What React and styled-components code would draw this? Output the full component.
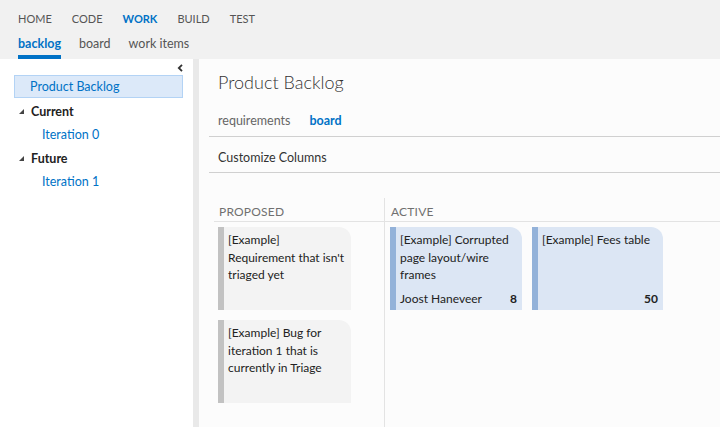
import React from 'react';
import styled, { createGlobalStyle } from 'styled-components';

const GlobalStyle = createGlobalStyle`
  html, body {
    margin: 0;
    padding: 0;
    height: 100%;
  }
  body {
    font-family: Lato, "Open Sans", sans-serif;
    color: #222;
    background: #fff;
  }
  #root {
    height: 100%;
  }
`;

const blue = '#0072c6';

const Page = styled.div`
  display: flex;
  flex-direction: column;
  height: 100vh;
  overflow: hidden;
`;

const Header = styled.header`
  background: #f1f1f1;
  height: 59px;
  padding-left: 18px;
  box-sizing: border-box;
  flex-shrink: 0;
`;

const TopNav = styled.nav`
  display: flex;
  gap: 20px;
  padding-top: 10px;
  height: 35px;
  box-sizing: border-box;
`;

const TopNavItem = styled.span`
  font-size: 11px;
  line-height: 18px;
  color: ${(p) => (p.active ? blue : '#555')};
  font-weight: ${(p) => (p.active ? 700 : 400)};
`;

const SubNav = styled.nav`
  display: flex;
  gap: 18px;
`;

const SubNavItem = styled.span`
  font-size: 12.5px;
  line-height: 17px;
  padding-bottom: 3px;
  border-bottom: 4px solid ${(p) => (p.active ? blue : 'transparent')};
  color: ${(p) => (p.active ? blue : '#555')};
  font-weight: ${(p) => (p.active ? 700 : 400)};
`;

const Body = styled.div`
  flex: 1;
  display: flex;
  min-height: 0;
`;

const LeftPanel = styled.aside`
  width: 193px;
  flex-shrink: 0;
  background: #fff;
  padding: 0 10px 0 14px;
  box-sizing: border-box;
`;

const CollapseRow = styled.div`
  display: flex;
  justify-content: flex-end;
  height: 16px;
  padding-top: 5px;
  box-sizing: border-box;
`;

const SelectedItem = styled.div`
  height: 23px;
  box-sizing: border-box;
  border: 1px solid #b3d3f5;
  background: #dce9f9;
  color: ${blue};
  font-size: 12.5px;
  line-height: 21px;
  padding-left: 15px;
`;

const Tree = styled.div`
  margin-top: 2px;
`;

const TreeRow = styled.div`
  display: flex;
  align-items: center;
  height: 23.3px;
  padding-left: ${(p) => (p.child ? 28 : 5)}px;
  font-size: 12.5px;
  font-weight: ${(p) => (p.child ? 400 : 700)};
  color: ${(p) => (p.child ? blue : '#222')};
`;

const Expander = styled.svg`
  width: 5px;
  height: 5px;
  margin-right: 7px;
  flex-shrink: 0;
`;

const Splitter = styled.div`
  width: 6px;
  flex-shrink: 0;
  background: #e9e9e9;
`;

const Main = styled.main`
  flex: 1;
  background: #fcfcfc;
  padding-left: 10px;
  display: flex;
  flex-direction: column;
  min-width: 0;
`;

const Title = styled.h1`
  margin: 0;
  padding: 11px 9px 0;
  font-size: 18px;
  line-height: 24px;
  font-weight: 300;
  color: #333;
`;

const Tabs = styled.div`
  display: flex;
  gap: 19px;
  margin-top: 18px;
  padding: 0 9px 6px;
  border-bottom: 1px solid #d0d0d0;
`;

const Tab = styled.span`
  font-size: 12.5px;
  line-height: 18px;
  color: ${(p) => (p.active ? blue : '#666')};
  font-weight: ${(p) => (p.active ? 700 : 400)};
`;

const Toolbar = styled.div`
  padding: 12px 9px 5px;
  font-size: 12.5px;
  line-height: 18px;
  color: #333;
  border-bottom: 1px solid #d0d0d0;
`;

const Board = styled.div`
  flex: 1;
  display: flex;
  padding: 25px 0 0 5px;
`;

const Column = styled.section`
  width: ${(p) => p.width};
  flex: ${(p) => (p.grow ? 1 : 'none')};
  box-sizing: border-box;
  border-left: ${(p) => (p.divided ? '1px solid #e3e3e3' : 'none')};
  display: flex;
  flex-direction: column;
`;

const ColumnHeader = styled.div`
  height: 24px;
  box-sizing: border-box;
  padding: 7px 0 0 ${(p) => (p.divided ? 6 : 5)}px;
  font-size: 12px;
  line-height: 14px;
  color: #707070;
  letter-spacing: 0.2px;
  border-bottom: 1px solid #e3e3e3;
`;

const CardArea = styled.div`
  display: flex;
  flex-direction: ${(p) => (p.row ? 'row' : 'column')};
  align-items: flex-start;
  gap: 10px;
  padding: 5px 0 0 ${(p) => (p.row ? 5 : 4)}px;
`;

const Card = styled.div`
  width: ${(p) => p.width}px;
  height: 83px;
  box-sizing: border-box;
  background: ${(p) => (p.active ? '#dce6f4' : '#f3f3f3')};
  border-left: 6px solid ${(p) => (p.active ? '#93b2d9' : '#c2c2c2')};
  border-top-right-radius: 12px;
  padding: 4px 5px 3px 4px;
  display: flex;
  flex-direction: column;
  font-size: 12px;
  line-height: 17.5px;
  color: #222;
`;

const CardTitle = styled.div`
  flex: 1;
`;

const CardFooter = styled.div`
  display: flex;
  justify-content: space-between;
`;

const Effort = styled.span`
  font-weight: 700;
`;

const Chevron = () => (
  <svg width="6" height="8" viewBox="0 0 6 8">
    <path d="M5 0.8 L1.8 4 L5 7.2" fill="none" stroke="#333" strokeWidth="1.8" />
  </svg>
);

const Triangle = () => (
  <Expander viewBox="0 0 5 5">
    <path d="M5 0 L5 5 L0 5 Z" fill="#444" />
  </Expander>
);

const topNav = ['HOME', 'CODE', 'WORK', 'BUILD', 'TEST'];
const subNav = ['backlog', 'board', 'work items'];

const proposed = [
  { id: 1, title: "[Example] Requirement that isn't triaged yet" },
  { id: 2, title: '[Example] Bug for iteration 1 that is currently in Triage' },
];

const active = [
  { id: 3, title: '[Example] Corrupted page layout/wire frames', owner: 'Joost Haneveer', effort: 8, width: 132 },
  { id: 4, title: '[Example] Fees table', owner: '', effort: 50, width: 131 },
];

export default function App() {
  return (
    <Page>
      <GlobalStyle />
      <Header>
        <TopNav>
          {topNav.map((item) => (
            <TopNavItem key={item} active={item === 'WORK'}>{item}</TopNavItem>
          ))}
        </TopNav>
        <SubNav>
          {subNav.map((item) => (
            <SubNavItem key={item} active={item === 'backlog'}>{item}</SubNavItem>
          ))}
        </SubNav>
      </Header>
      <Body>
        <LeftPanel>
          <CollapseRow><Chevron /></CollapseRow>
          <SelectedItem>Product Backlog</SelectedItem>
          <Tree>
            <TreeRow><Triangle />Current</TreeRow>
            <TreeRow child>Iteration 0</TreeRow>
            <TreeRow><Triangle />Future</TreeRow>
            <TreeRow child>Iteration 1</TreeRow>
          </Tree>
        </LeftPanel>
        <Splitter />
        <Main>
          <Title>Product Backlog</Title>
          <Tabs>
            <Tab>requirements</Tab>
            <Tab active>board</Tab>
          </Tabs>
          <Toolbar>Customize Columns</Toolbar>
          <Board>
            <Column width="170px">
              <ColumnHeader>PROPOSED</ColumnHeader>
              <CardArea>
                {proposed.map((c) => (
                  <Card key={c.id} width={133}>
                    <CardTitle>{c.title}</CardTitle>
                  </Card>
                ))}
              </CardArea>
            </Column>
            <Column grow divided>
              <ColumnHeader divided>ACTIVE</ColumnHeader>
              <CardArea row>
                {active.map((c) => (
                  <Card key={c.id} width={c.width} active>
                    <CardTitle>{c.title}</CardTitle>
                    <CardFooter>
                      <span>{c.owner}</span>
                      <Effort>{c.effort}</Effort>
                    </CardFooter>
                  </Card>
                ))}
              </CardArea>
            </Column>
          </Board>
        </Main>
      </Body>
    </Page>
  );
}
